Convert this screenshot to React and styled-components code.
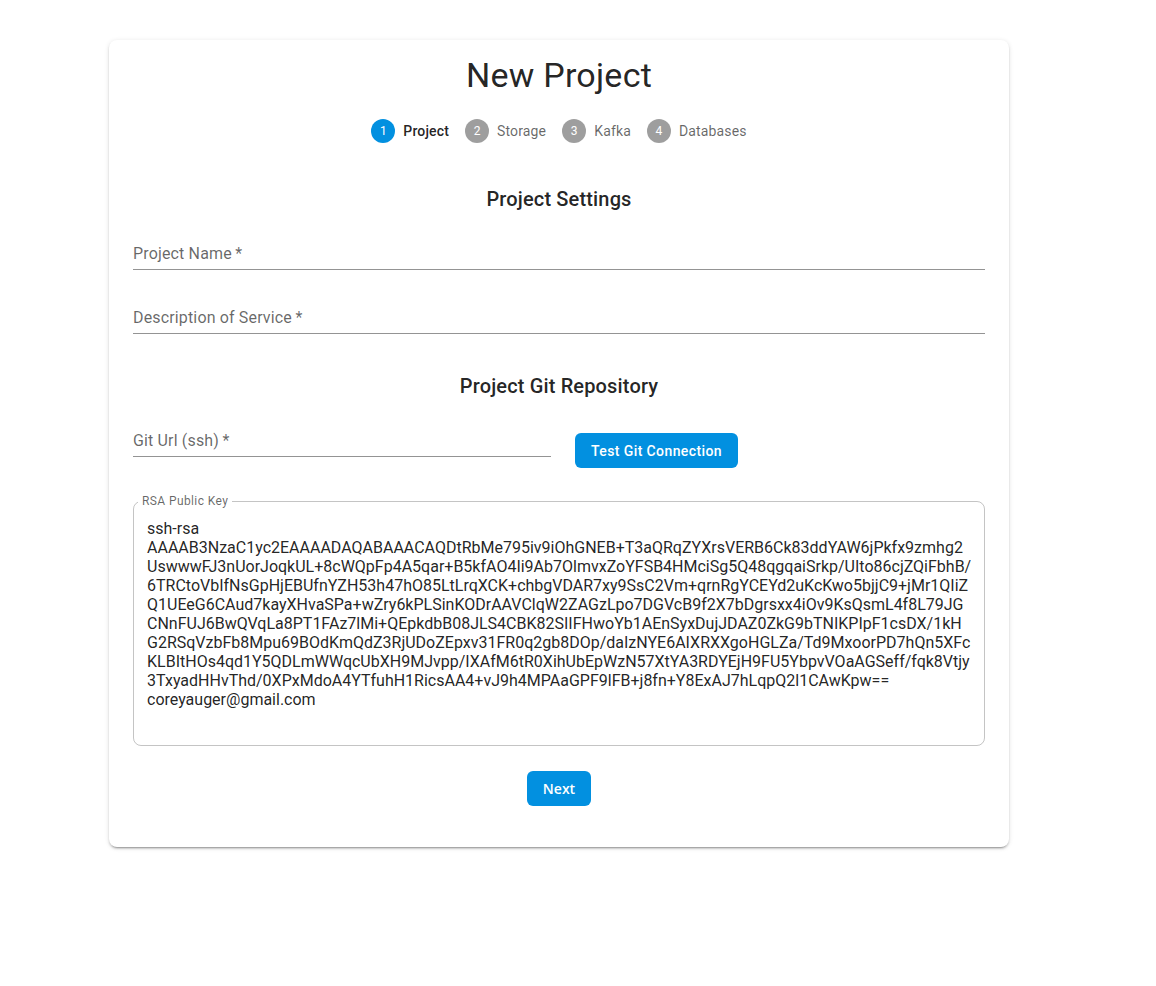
import React from "react";
import styled, { createGlobalStyle } from "styled-components";

const BLUE = "#0290e0";

const rsaKey = [
  "ssh-rsa",
  "AAAAB3NzaC1yc2EAAAADAQABAAACAQDtRbMe795iv9iOhGNEB+T3aQRqZYXrsVERB6Ck83ddYAW6jPkfx9zmhg2",
  "UswwwFJ3nUorJoqkUL+8cWQpFp4A5qar+B5kfAO4Ii9Ab7OlmvxZoYFSB4HMciSg5Q48qgqaiSrkp/UIto86cjZQiFbhB/",
  "6TRCtoVbIfNsGpHjEBUfnYZH53h47hO85LtLrqXCK+chbgVDAR7xy9SsC2Vm+qrnRgYCEYd2uKcKwo5bjjC9+jMr1QIiZ",
  "Q1UEeG6CAud7kayXHvaSPa+wZry6kPLSinKODrAAVClqW2ZAGzLpo7DGVcB9f2X7bDgrsxx4iOv9KsQsmL4f8L79JG",
  "CNnFUJ6BwQVqLa8PT1FAz7lMi+QEpkdbB08JLS4CBK82SIIFHwoYb1AEnSyxDujJDAZ0ZkG9bTNIKPIpF1csDX/1kH",
  "G2RSqVzbFb8Mpu69BOdKmQdZ3RjUDoZEpxv31FR0q2gb8DOp/daIzNYE6AIXRXXgoHGLZa/Td9MxoorPD7hQn5XFc",
  "KLBItHOs4qd1Y5QDLmWWqcUbXH9MJvpp/IXAfM6tR0XihUbEpWzN57XtYA3RDYEjH9FU5YbpvVOaAGSeff/fqk8Vtjy",
  "3TxyadHHvThd/0XPxMdoA4YTfuhH1RicsAA4+vJ9h4MPAaGPF9lFB+j8fn+Y8ExAJ7hLqpQ2l1CAwKpw==",
  "coreyauger@gmail.com",
].join("\n");

const steps = ["Project", "Storage", "Kafka", "Databases"];

const GlobalStyle = createGlobalStyle`
  body {
    margin: 0;
    background: #fff;
    font-family: Roboto, "Liberation Sans", sans-serif;
    color: rgba(0, 0, 0, 0.87);
  }
`;

const Page = styled.div`
  padding: 40px 0 0 109px;
  min-height: 946px;
`;

const Card = styled.div`
  width: 900px;
  box-sizing: border-box;
  padding: 14px 24px 41px;
  background: #fff;
  border-radius: 8px;
  box-shadow: 0px 3px 1px -2px rgba(0, 0, 0, 0.2), 0px 2px 2px 0px rgba(0, 0, 0, 0.14),
    0px 1px 5px 0px rgba(0, 0, 0, 0.12);
  display: flex;
  flex-direction: column;
`;

const Title = styled.h1`
  margin: 0;
  font-size: 34px;
  line-height: 42px;
  font-weight: 400;
  letter-spacing: 0.25px;
  text-align: center;
  color: rgba(0, 0, 0, 0.87);
`;

const Stepper = styled.div`
  margin-top: 23px;
  display: flex;
  justify-content: center;
  align-items: center;
`;

const Step = styled.div`
  display: flex;
  align-items: center;
  gap: 8px;
  padding: 0 8px;
`;

const StepIcon = styled.span`
  width: 24px;
  height: 24px;
  border-radius: 50%;
  background: ${(p) => (p.$active ? BLUE : "rgba(0, 0, 0, 0.38)")};
  color: #fff;
  font-size: 12px;
  display: flex;
  align-items: center;
  justify-content: center;
`;

const StepLabel = styled.span`
  font-size: 14px;
  line-height: 20px;
  letter-spacing: 0.15px;
  font-weight: ${(p) => (p.$active ? 500 : 400)};
  color: ${(p) => (p.$active ? "rgba(0, 0, 0, 0.87)" : "rgba(0, 0, 0, 0.6)")};
`;

const SectionTitle = styled.h2`
  margin: ${(p) => p.$top}px 0 0;
  font-size: 20px;
  line-height: 32px;
  font-weight: 500;
  letter-spacing: 0.15px;
  text-align: center;
  color: rgba(0, 0, 0, 0.87);
`;

const Field = styled.div`
  margin-top: ${(p) => p.$top || 0}px;
  padding-top: 16px;
  width: ${(p) => p.$width || "100%"};
  flex: ${(p) => (p.$width ? "none" : "1")};
`;

const Input = styled.div`
  padding: 4px 0 4px;
  line-height: 23px;
  font-size: 16px;
  letter-spacing: 0.15px;
  color: rgba(0, 0, 0, 0.6);
  border-bottom: 1px solid rgba(0, 0, 0, 0.42);
`;

const GitRow = styled.div`
  margin-top: 7px;
  display: flex;
  align-items: flex-start;
  gap: 24px;
`;

const Button = styled.button`
  border: none;
  border-radius: 6px;
  background: ${BLUE};
  color: #fff;
  height: 35px;
  padding: 0 16px;
  font-family: ${(p) => (p.$alt ? '"Open Sans", sans-serif' : 'Roboto, sans-serif')};
  font-size: 14px;
  font-weight: ${(p) => (p.$alt ? 600 : 500)};
  letter-spacing: ${(p) => (p.$alt ? "0" : "0.4px")};
  cursor: pointer;
`;

const TestButton = styled(Button)`
  margin-top: 24px;
`;

const KeyBox = styled.fieldset`
  margin: 27px 0 0;
  padding: 0;
  min-width: 0;
  border: 1px solid rgba(0, 0, 0, 0.23);
  border-radius: 8px;
`;

const KeyLegend = styled.legend`
  margin-left: 4px;
  padding: 0 4px;
  font-size: 12px;
  line-height: 12px;
  letter-spacing: 0.4px;
  color: rgba(0, 0, 0, 0.6);
`;

const KeyText = styled.div`
  padding: 12px 13px 17px;
  min-height: 209px;
  font-size: 16px;
  line-height: 19px;
  white-space: pre;
  overflow: hidden;
  color: rgba(0, 0, 0, 0.87);
`;

const Footer = styled.div`
  margin-top: 25px;
  display: flex;
  justify-content: center;
`;

export default function App() {
  return (
    <Page>
      <GlobalStyle />
      <Card>
        <Title>New Project</Title>
        <Stepper>
          {steps.map((s, i) => (
            <Step key={s}>
              <StepIcon $active={i === 0}>{i + 1}</StepIcon>
              <StepLabel $active={i === 0}>{s}</StepLabel>
            </Step>
          ))}
        </Stepper>

        <SectionTitle $top={40}>Project Settings</SectionTitle>
        <Field $top={7}>
          <Input>Project Name&thinsp;*</Input>
        </Field>
        <Field $top={16}>
          <Input>Description of Service&thinsp;*</Input>
        </Field>

        <SectionTitle $top={36}>Project Git Repository</SectionTitle>
        <GitRow>
          <Field $width="418px">
            <Input>Git Url (ssh)&thinsp;*</Input>
          </Field>
          <TestButton>Test Git Connection</TestButton>
        </GitRow>

        <KeyBox>
          <KeyLegend>RSA Public Key</KeyLegend>
          <KeyText>{rsaKey}</KeyText>
        </KeyBox>

        <Footer>
          <Button $alt>Next</Button>
        </Footer>
      </Card>
    </Page>
  );
}
